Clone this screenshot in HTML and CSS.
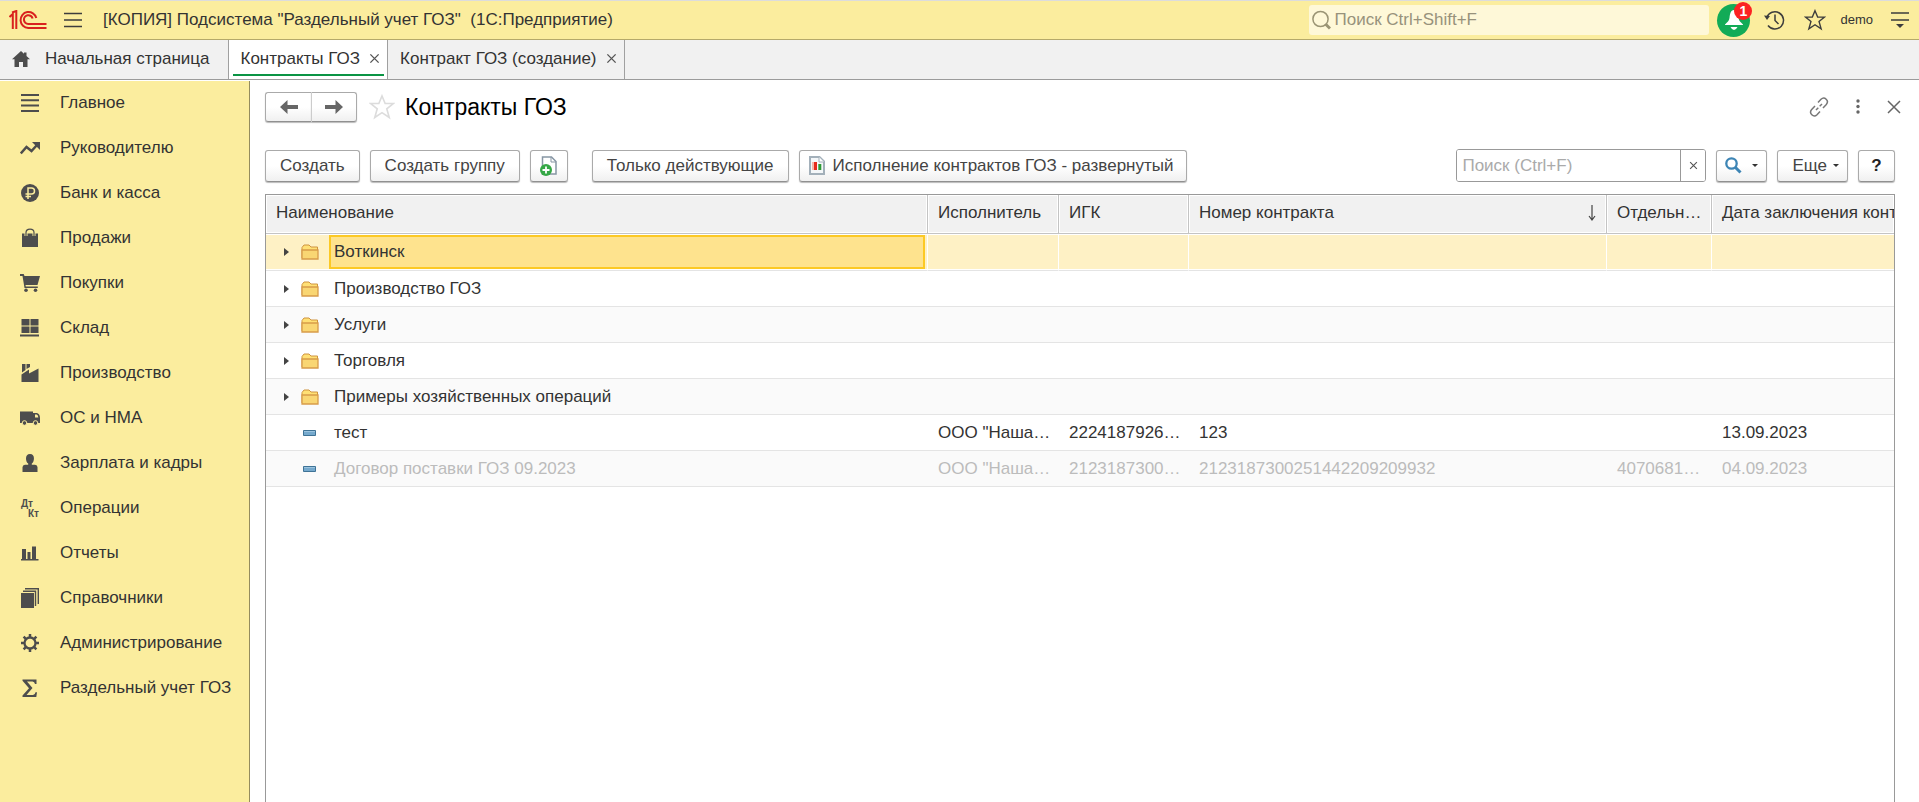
FILE: index.html
```html
<!DOCTYPE html>
<html lang="ru">
<head>
<meta charset="utf-8">
<title>Контракты ГОЗ</title>
<link rel="stylesheet" href="styles.css">
</head>
<body>
<svg class="sprite" aria-hidden="true">
  <symbol id="folder" viewBox="0 0 18 16">
    <path d="M1 14V3.500L3 1h5l2 2h6.500v11.500H1.500z" fill="#ffe075" stroke="#cf9440"/>
    <path d="M1 6h16v9H1z" fill="#f9d673" stroke="#d79c4a" stroke-width="1.300"/>
  </symbol>
  <symbol id="item" viewBox="0 0 13 6">
    <path d="M.5.5h12v5H.5z" fill="#75a9cd" stroke="#3f7396"/>
    <path d="M1 1h11v1H1z" fill="#9cc4df"/>
  </symbol>
  <symbol id="cross" viewBox="0 0 12 12">
    <path d="M1.500 1.500l9 9M10.500 1.500l-9 9" fill="none" stroke="currentColor" stroke-width="1.500"/>
  </symbol>
  <symbol id="star" viewBox="0 0 24 24">
    <path d="M12 1.800l2.900 7h7.500l-6 4.900 2.300 8L12 17.200l-6.700 4.500 2.300-8-6-4.900h7.500z" fill="none" stroke="currentColor" stroke-width="1.500"/>
  </symbol>
</svg>

<header class="topbar">
  <svg class="logo" viewBox="0 0 38 20" fill="none" stroke="#d9211e" stroke-width="2">
    <path d="M.5 7L3.800 4v15M3 2.500L7.300 1v18"/>
    <path d="M27.300 8A8 8 0 1 0 19.300 18H37.500"/>
    <path d="M23.600 8.500A4.400 4.400 0 1 0 19.300 14H37.500"/>
  </svg>
  <button class="icon-btn" aria-label="Меню">
    <svg width="18" height="16" viewBox="0 0 18 16"><path d="M0 1.500h18M0 8h18M0 14.500h18" stroke="#3d3d3d" stroke-width="1.300"/></svg>
  </button>
  <span class="app-title">[КОПИЯ] Подсистема "Раздельный учет ГОЗ"&nbsp; (1С:Предприятие)</span>
  <label class="global-search">
    <svg width="19" height="20" viewBox="0 0 19 20" fill="none" stroke="#9a9474"><circle cx="8.500" cy="9" r="7.600" stroke-width="1.500"/><path d="M13.500 14l4.500 4.500" stroke-width="3"/></svg>
    <input type="text" placeholder="Поиск Ctrl+Shift+F" aria-label="Поиск">
  </label>
  <button class="bell" aria-label="Уведомления">
    <svg width="18" height="20" viewBox="0 0 18 20" fill="#fff"><path d="M9 0C5.500 0 5 4 4.500 8 4 11 2.500 12 0 14.500V15h18v-.5C15.500 12 14 11 13.500 8 13 4 12.500 0 9 0zM5.500 17h7Q11 20 9 20T5.500 17z"/></svg>
    <span class="badge">1</span>
  </button>
  <button class="icon-btn history" aria-label="История">
    <svg width="21" height="20" viewBox="0 0 21 20" fill="none" stroke="#3d3d3d" stroke-width="1.500"><path d="M2.800 7.500A8.600 8.600 0 1 1 4 15.500M11 4.500v6l3.500 3.500"/><path d="M0 5.500l6 .5-3 4z" fill="#3d3d3d" stroke="none"/></svg>
  </button>
  <button class="icon-btn favorite" aria-label="Избранное"><svg width="22" height="22"><use href="#star"/></svg></button>
  <span class="user">demo</span>
  <button class="icon-btn" aria-label="Сервис">
    <svg width="18" height="17" viewBox="0 0 18 17"><path d="M0 1h18M0 8h18" stroke="#3d3d3d" stroke-width="1.500"/><path d="M5 12h8l-4 4z" fill="#3d3d3d"/></svg>
  </button>
</header>

<nav class="tabs">
  <a class="tab home" href="#"><svg width="18" height="16" viewBox="0 0 18 16" fill="#4d4d4d"><path d="M9 0L0 8.300h2.500V16H7v-5h4v5h4.500V8.300H18L14.500 5V1.500H12v1.300z"/></svg><span>Начальная страница</span></a>
  <a class="tab active" href="#"><span>Контракты ГОЗ</span><svg class="tab-close"><use href="#cross"/></svg></a>
  <a class="tab" href="#"><span>Контракт ГОЗ (создание)</span><svg class="tab-close"><use href="#cross"/></svg></a>
</nav>

<div class="workspace">
  <aside class="sidebar">
    <a href="#"><svg viewBox="0 0 20 20"><path d="M1 2h18M1 7.300h18M1 12.600h18M1 17.900h18" stroke="#4d4d4d" stroke-width="2"/></svg>Главное</a>
    <a href="#"><svg viewBox="0 0 20 20"><path d="M.8 15.500L6.500 9l5 4L17 7" fill="none" stroke="#4d4d4d" stroke-width="2.500"/><path d="M12 4h8v8z"/></svg>Руководителю</a>
    <a href="#"><svg viewBox="0 0 20 20"><circle cx="10" cy="10" r="9"/><path d="M8 16V5h3.500a2.900 2.900 0 0 1 0 6H5.500M5.500 13.500H11" fill="none" stroke="#fbed9e" stroke-width="1.500"/></svg>Банк и касса</a>
    <a href="#"><svg viewBox="0 0 20 20"><path d="M2 5.500h3.500V8h1V5.500h7V8h1V5.500H18V19H2z"/><path d="M6 8V4.500C6 0 14 0 14 4.500V8" fill="none" stroke="#fbed9e" stroke-width="3"/><path d="M6 8V4.500C6 0 14 0 14 4.500V8" fill="none" stroke="#4d4d4d" stroke-width="1.200"/></svg>Продажи</a>
    <a href="#"><svg viewBox="0 0 20 20"><path d="M0 1h3.700l.8 2H20l-2.500 9H5.500l.3 1.500h12V15H4.500L2.500 3H0z"/><circle cx="6" cy="17.300" r="1.800"/><circle cx="15.500" cy="17.300" r="1.800"/></svg>Покупки</a>
    <a href="#"><svg viewBox="0 0 20 20"><path d="M1.500 1h8v6.500h-8zM10.500 1h8v6.500h-8zM1.500 8.500h8v6.500h-8zM10.500 8.500h8v6.500h-8zM0 16.500h19v2H0z"/></svg>Склад</a>
    <a href="#"><svg viewBox="0 0 20 20"><path d="M1.500 11.500L9 6.500v4l9.500-5V19h-17zM2 1h3.500v6L2 9.500zM6.500 1H10v3L6.500 6z"/></svg>Производство</a>
    <a href="#"><svg viewBox="0 0 20 20"><path d="M0 3.500h13V15H0zM14 5H17q3 1 3 5v5h-7V5z"/><path d="M15 6.500h1.700q1.500.5 1.600 3H15z" fill="#fbed9e"/><circle cx="4.500" cy="15" r="2.300" stroke="#fbed9e" stroke-width="1"/><circle cx="15.500" cy="15" r="2.300" stroke="#fbed9e" stroke-width="1"/></svg>ОС и НМА</a>
    <a href="#"><svg viewBox="0 0 20 20"><path d="M10 1c5.500 0 4.500 8 1.800 9.500v1.300h3.200q2.500.2 2.500 2.500V19h-15v-4.700q0-2.300 2.500-2.500h3.200v-1.300C5.500 9 4.500 1 10 1z"/></svg>Зарплата и кадры</a>
    <a href="#"><svg class="dtkt" viewBox="0 0 20 20"><text x="1" y="9">Дт</text><text x="8" y="19">Кт</text></svg>Операции</a>
    <a href="#"><svg viewBox="0 0 20 20"><path d="M2 6h4v10h1.500V9h3v7H12V3.500h4V16h2.500v1.500H1V16h1z"/></svg>Отчеты</a>
    <a href="#"><svg viewBox="0 0 20 20"><path d="M1 5h13v15H1z"/><path d="M3 3.300h12.500V18M5 .8h13.300V16" fill="none" stroke="#4d4d4d" stroke-width="1.400"/></svg>Справочники</a>
    <a href="#"><svg viewBox="0 0 20 20"><g fill="none" stroke="#4d4d4d" stroke-width="2.500"><circle cx="10" cy="10" r="5.500" stroke-width="2.300"/><path d="M10 1v3.500M10 15.500V19M1 10h3.500M15.500 10H19M3.600 3.600l2.500 2.500M13.900 13.900l2.500 2.500M16.400 3.600l-2.500 2.500M6.100 13.900l-2.500 2.500"/></g></svg>Администрирование</a>
    <a href="#"><svg viewBox="0 0 20 20"><path d="M2.500 1.500h14v4.500H15q-.5-2.500-2.500-2.500h-5.500l5.500 6.500-6 7h6.500q2 0 2.500-2.800h1.500L16.300 19H2.500v-1.500l6.500-7.300-6.500-7.500z"/></svg>Раздельный учет ГОЗ</a>
  </aside>

  <main class="page">
    <div class="page-head">
      <div class="nav-buttons">
        <button class="btn" aria-label="Назад"><svg width="18" height="14" viewBox="0 0 18 14" fill="#666"><path d="M0 7l7.500-7v5H18v4H7.500v5z"/></svg></button>
        <button class="btn" aria-label="Вперед"><svg width="18" height="14" viewBox="0 0 18 14" fill="#666"><path d="M18 7l-7.500-7v5H0v4h10.500v5z"/></svg></button>
      </div>
      <button class="icon-btn page-star" aria-label="В избранное"><svg width="26" height="26"><use href="#star"/></svg></button>
      <h1>Контракты ГОЗ</h1>
      <div class="page-tools">
        <button class="icon-btn" aria-label="Получить ссылку"><svg width="20" height="20" viewBox="0 0 20 20" fill="none" stroke="#777" stroke-width="1.500"><path d="M9 5.500l3-3.200c3.500-3.500 8.500 1.500 5.300 5.200L14 11M11 14.500l-3 3.200C4.500 21.200-.5 16.200 2.700 12.500L6 9M7 13l2.300-2.300M10.700 9.300L13 7" /></svg></button>
        <button class="icon-btn" aria-label="Еще действия"><svg width="4" height="15" viewBox="0 0 4 15" fill="#666"><circle cx="2" cy="2" r="1.700"/><circle cx="2" cy="7.500" r="1.700"/><circle cx="2" cy="13" r="1.700"/></svg></button>
        <button class="icon-btn" aria-label="Закрыть"><svg width="14" height="14" viewBox="0 0 14 14" stroke="#666" stroke-width="1.500"><path d="M1 1l12 12M13 1L1 13"/></svg></button>
      </div>
    </div>

    <div class="toolbar">
      <button class="btn">Создать</button>
      <button class="btn">Создать группу</button>
      <button class="btn square" aria-label="Создать копированием"><svg width="18" height="20" viewBox="0 0 18 20"><path d="M2.500 1h9L16 5.500V18H2.500z" fill="#fff" stroke="#8796a4" stroke-width="1.500"/><path d="M11 1v5h5" fill="none" stroke="#8796a4"/><circle cx="6" cy="14" r="6" fill="#35a846"/><path d="M6 10.500v7M2.500 14h7" stroke="#fff" stroke-width="1.800"/></svg></button>
      <button class="btn after-gap">Только действующие</button>
      <button class="btn report"><svg width="16" height="19" viewBox="0 0 16 19"><path d="M1 1h9.500L15 5.500V18H1z" fill="#f4f7f9" stroke="#a3b0ba" stroke-width="2"/><path d="M10 1v5h5" fill="#fff" stroke="#a3b0ba"/><path d="M4 6v8" stroke="#f6a08f" stroke-width="1.500"/><path d="M6.500 6v8" stroke="#e62a1c" stroke-width="3"/><path d="M10.800 8v6" stroke="#2e9a36" stroke-width="3"/></svg>Исполнение контрактов ГОЗ - развернутый</button>
      <div class="list-search">
        <input type="text" placeholder="Поиск (Ctrl+F)" aria-label="Поиск по списку">
        <button aria-label="Очистить"><svg width="9" height="9"><use href="#cross"/></svg></button>
      </div>
      <button class="btn find" aria-label="Найти"><svg width="17" height="17" viewBox="0 0 17 17" fill="none" stroke="#3d85b5"><circle cx="6.500" cy="6.500" r="5.200" stroke-width="2.300"/><path d="M10.500 10.500l5 5" stroke-width="3"/></svg><i class="caret"></i></button>
      <button class="btn more">Еще<i class="caret"></i></button>
      <button class="btn help">?</button>
    </div>

    <div class="grid-box">
      <table>
        <colgroup><col><col class="c-exec"><col class="c-igk"><col class="c-num"><col class="c-acc"><col class="c-date"></colgroup>
        <thead>
          <tr><th>Наименование</th><th>Исполнитель</th><th>ИГК</th><th><span class="sorted">Номер контракта<svg width="8" height="16" viewBox="0 0 8 16" fill="none" stroke="#444" stroke-width="1.200"><path d="M4 0v15M1 11l3 4 3-4"/></svg></span></th><th>Отдельн…</th><th>Дата заключения контракта</th></tr>
        </thead>
        <tbody>
          <tr class="selected"><td class="name"><div class="cell"><i class="expand"></i><svg class="folder"><use href="#folder"/></svg><span>Воткинск</span></div></td><td></td><td></td><td></td><td></td><td></td></tr>
          <tr><td class="name"><div class="cell"><i class="expand"></i><svg class="folder"><use href="#folder"/></svg><span>Производство ГОЗ</span></div></td><td></td><td></td><td></td><td></td><td></td></tr>
          <tr><td class="name"><div class="cell"><i class="expand"></i><svg class="folder"><use href="#folder"/></svg><span>Услуги</span></div></td><td></td><td></td><td></td><td></td><td></td></tr>
          <tr><td class="name"><div class="cell"><i class="expand"></i><svg class="folder"><use href="#folder"/></svg><span>Торговля</span></div></td><td></td><td></td><td></td><td></td><td></td></tr>
          <tr><td class="name"><div class="cell"><i class="expand"></i><svg class="folder"><use href="#folder"/></svg><span>Примеры хозяйственных операций</span></div></td><td></td><td></td><td></td><td></td><td></td></tr>
          <tr><td class="name"><div class="cell leaf"><svg class="item"><use href="#item"/></svg><span>тест</span></div></td><td>ООО "Наша…</td><td>2224187926…</td><td>123</td><td></td><td>13.09.2023</td></tr>
          <tr class="muted"><td class="name"><div class="cell leaf"><svg class="item"><use href="#item"/></svg><span>Договор поставки ГОЗ 09.2023</span></div></td><td>ООО "Наша…</td><td>2123187300…</td><td>2123187300251442209209932</td><td>4070681…</td><td>04.09.2023</td></tr>
        </tbody>
      </table>
    </div>
  </main>
</div>
</body>
</html>
```
FILE: styles.css
```css
* { box-sizing: border-box; }

body {
  margin: 0;
  height: 100vh;
  display: flex;
  flex-direction: column;
  overflow: hidden;
  background: #fff;
  color: #333;
  font: 17px/20px "Liberation Sans", Arial, sans-serif;
}

button, input { font: inherit; color: inherit; }
button { cursor: pointer; }
a { color: inherit; text-decoration: none; }
svg { display: block; flex: none; }
.sprite { position: absolute; width: 0; height: 0; }

.icon-btn {
  display: flex;
  padding: 0;
  border: 0;
  background: none;
  color: #3d3d3d;
}

/* Top bar */
.topbar {
  flex: none;
  display: flex;
  align-items: center;
  height: 40px;
  padding: 0 10px 0 9px;
  border-top: 1px solid #dcdcdc;
  border-bottom: 1px solid #b5a96a;
  background: #fbed9e;
}
.logo { width: 38px; height: 20px; margin-right: 17px; }
.app-title { flex: 1; margin-left: 21px; white-space: nowrap; }
.global-search {
  display: flex;
  align-items: center;
  width: 400px;
  height: 30px;
  padding-left: 3px;
  gap: 3px;
  border-radius: 3px;
  background: #fef8d8;
}
.global-search input {
  flex: 1;
  min-width: 0;
  padding: 0;
  border: 0;
  outline: 0;
  background: none;
}
.global-search input::placeholder { color: #97927c; opacity: 1; }
.bell {
  position: relative;
  display: flex;
  align-items: center;
  justify-content: center;
  width: 33px;
  height: 33px;
  margin-left: 8px;
  padding: 0;
  border: 0;
  border-radius: 50%;
  background: #12ab57;
}
.badge {
  position: absolute;
  top: -2px;
  right: -2px;
  width: 18px;
  height: 18px;
  border-radius: 50%;
  background: #fb2222;
  color: #fff;
  font-size: 14px;
  font-weight: 700;
  line-height: 18px;
}
.history { margin-left: 14px; }
.favorite { margin-left: 19px; }
.user { margin: 0 18px 0 14px; font-size: 13px; }

/* Open windows */
.tabs {
  flex: none;
  display: flex;
  height: 40px;
  border-bottom: 1px solid #9b9b9b;
  background: #f1f1f1;
}
.tab {
  position: relative;
  display: flex;
  align-items: center;
  gap: 9px;
  padding: 0 7px 2px 12px;
  border-right: 1px solid #a0a0a0;
  white-space: nowrap;
}
.home { gap: 15px; padding: 0 18px 2px 12px; }
.active { background: #fff; }
.active::after {
  content: "";
  position: absolute;
  left: 4px;
  right: 3px;
  bottom: 3px;
  height: 2px;
  background: #0b9444;
}
.tab-close { width: 11px; height: 11px; color: #555; }

/* Body */
.workspace { flex: 1; display: flex; min-height: 0; padding-top: 1px; }
.sidebar {
  flex: none;
  width: 250px;
  border-right: 1px solid #948c5e;
  background: #fbed9e;
}
.sidebar a {
  display: flex;
  align-items: center;
  gap: 20px;
  height: 45px;
  padding: 0 0 1px 20px;
  white-space: nowrap;
}
.sidebar svg { width: 20px; height: 20px; fill: #4d4d4d; }
.sidebar .dtkt { font-size: 10px; font-weight: 700; }

.page {
  flex: 1;
  min-width: 0;
  display: flex;
  flex-direction: column;
  padding: 10px 18px 0 15px;
}
.page-head { display: flex; align-items: center; height: 31px; }

.btn {
  display: flex;
  align-items: center;
  justify-content: center;
  height: 32px;
  padding: 0 14px;
  border: 1px solid #aaa;
  border-bottom-color: #909090;
  border-radius: 3px;
  background: linear-gradient(#fff 50%, #f0f0f0);
  box-shadow: 0 1px 1px #bbb;
  color: #444;
  white-space: nowrap;
}
.nav-buttons { display: flex; }
.nav-buttons .btn { width: 46px; height: 30px; padding: 0; }
.nav-buttons .btn:first-child { border-radius: 3px 0 0 3px; border-right: 0; }
.nav-buttons .btn:last-child { border-radius: 0 3px 3px 0; border-left-color: #ccc; }
.page-star { margin: 0 10px 0 12px; color: #dcdcdc; }
h1 { margin: 0; color: #000; font-size: 23px; font-weight: 400; line-height: 30px; }
.page-tools { display: flex; align-items: center; gap: 27px; margin-left: auto; }

.toolbar { display: flex; align-items: center; gap: 10px; margin: 27px 6px 0 0; }
.square { width: 38px; padding: 0; }
.after-gap { margin-left: 14px; }
.report { gap: 8px; padding: 0 12px 0 9px; }
.list-search {
  display: flex;
  width: 250px;
  height: 33px;
  margin-left: auto;
  border: 1px solid #999;
  border-radius: 3px;
  overflow: hidden;
}
.list-search input {
  flex: 1;
  min-width: 0;
  padding: 0 5px;
  border: 0;
  outline: 0;
}
.list-search input::placeholder { color: #aaa; opacity: 1; }
.list-search button {
  display: flex;
  align-items: center;
  justify-content: center;
  width: 25px;
  padding: 0;
  border: 0;
  border-left: 1px solid #999;
  background: #fff;
  color: #555;
}
.caret {
  border: 3px solid transparent;
  border-top-color: #333;
  border-bottom: 0;
}
.find { gap: 10px; width: 51px; padding: 0; }
.more { gap: 6px; padding: 0 8px 0 14px; }
.help { width: 37px; padding: 0; color: #222; font-weight: 700; }

/* Contract list */
.grid-box {
  flex: 1;
  min-height: 0;
  margin: 12px 6px 0 0;
  border: 1px solid #999;
  border-bottom: 0;
  overflow: hidden;
}
table { width: 100%; table-layout: fixed; border-collapse: separate; border-spacing: 0; }
.c-exec { width: 131px; }
.c-igk { width: 130px; }
.c-num { width: 418px; }
.c-acc { width: 105px; }
.c-date { width: 182px; }
th, td { padding: 0 10px; overflow: hidden; white-space: nowrap; text-align: left; font-weight: 400; }
th {
  height: 39px;
  padding-bottom: 3px;
  border-right: 1px solid #c4c4c4;
  border-bottom: 1px solid #c4c4c4;
  background: #f1f1f1;
  box-shadow: inset 0 0 0 1px #fff;
}
th:last-child { padding-right: 0; border-right: 0; }
.sorted { display: flex; align-items: center; justify-content: space-between; }
td { height: 36px; border-bottom: 1px solid #e4e4e4; }
tbody tr:nth-child(odd) td { background: #fafafa; }
.name { padding: 0; }
.cell { display: flex; align-items: center; height: 35px; padding-left: 18px; }
.cell span { flex: 1; padding-left: 5px; }
.expand { border: 4px solid transparent; border-left: 5px solid #444; border-right: 0; margin-right: 12px; }
.folder { width: 18px; height: 16px; margin-right: 10px; }
.leaf { padding-left: 37px; }
.item { width: 13px; height: 6px; margin-right: 13px; }
tbody tr.selected td {
  height: 37px;
  background: #fef1c5;
  border-right: 1px solid #fff;
  box-shadow: inset 0 1px #fff, inset 0 -1px #fff;
}
tbody tr.selected td:last-child { border-right: 0; }
.selected .cell { height: 36px; padding-top: 1px; padding-bottom: 1px; }
.selected .cell span {
  align-self: stretch;
  margin-right: 2px;
  padding-left: 3px;
  border: 2px solid #fcc925;
  background: #fee38e;
  line-height: 29px;
}
.muted { color: #bcbcbc; }
```
